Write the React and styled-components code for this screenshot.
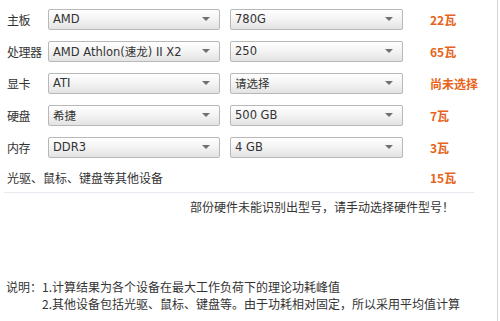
import React from "react";
import styled, { createGlobalStyle } from "styled-components";

const GlobalStyle = createGlobalStyle`
  body {
    margin: 0;
    background: #fff;
    font-family: "Noto Sans CJK SC", "DejaVu Sans", sans-serif;
    color: #333;
  }
`;

const rows = [
  { label: "主板", a: "AMD", b: "780G", watt: "22瓦" },
  { label: "处理器", a: "AMD Athlon(速龙) II X2", b: "250", watt: "65瓦" },
  { label: "显卡", a: "ATI", b: "请选择", watt: "尚未选择" },
  { label: "硬盘", a: "希捷", b: "500 GB", watt: "7瓦" },
  { label: "内存", a: "DDR3", b: "4 GB", watt: "3瓦" },
];

const App = () => {
  return (
    <Page>
      <GlobalStyle />
      <Table>
        {rows.map((r) => (
          <Row key={r.label}>
            <Label>{r.label}</Label>
            <Select width={172}>
              <Value>{r.a}</Value>
              <Arrow />
            </Select>
            <Select width={173} gap={10}>
              <Value>{r.b}</Value>
              <Arrow />
            </Select>
            <Watt>{r.watt}</Watt>
          </Row>
        ))}
        <Row last>
          <OtherLabel>光驱、鼠标、键盘等其他设备</OtherLabel>
          <Watt>15瓦</Watt>
        </Row>
      </Table>
      <Message>部份硬件未能识别出型号，请手动选择硬件型号！</Message>
      <Notes>
        <NoteHead>说明：</NoteHead>
        <NoteList>
          <span>1.计算结果为各个设备在最大工作负荷下的理论功耗峰值</span>
          <span>2.其他设备包括光驱、鼠标、键盘等。由于功耗相对固定，所以采用平均值计算</span>
        </NoteList>
      </Notes>
    </Page>
  );
};

const Page = styled.div`
  width: 498px;
  height: 321px;
  border-right: 1px solid #d4d4d4;
  display: flex;
  flex-direction: column;
  box-sizing: border-box;
`;

const Table = styled.div`
  margin: 0 23px 0 4px;
  padding-top: 3px;
  border-bottom: 1px solid #e6e9ef;
`;

const Row = styled.div`
  display: flex;
  align-items: center;
  height: ${(p) => (p.last ? "29px" : "32px")};
`;

const Label = styled.div`
  width: 44px;
  padding-left: 3px;
  box-sizing: border-box;
  font-size: 12px;
  color: #333;
  white-space: nowrap;
  letter-spacing: -0.5px;
`;

const Select = styled.div`
  width: ${(p) => p.width}px;
  margin-left: ${(p) => p.gap || 0}px;
  height: 21px;
  box-sizing: border-box;
  border: 1px solid #b8b8b8;
  border-radius: 2px;
  background: linear-gradient(#ffffff 0%, #f3f3f3 50%, #e3e3e3 100%);
  display: flex;
  align-items: center;
  justify-content: space-between;
  padding: 0 9px 0 4px;
`;

const Value = styled.span`
  font-family: "DejaVu Sans", "Noto Sans CJK SC", sans-serif;
  font-size: 11.5px;
  color: #333;
  white-space: nowrap;
`;

const Arrow = styled.span`
  width: 0;
  height: 0;
  border-left: 4px solid transparent;
  border-right: 4px solid transparent;
  border-top: 4px solid #707070;
`;

const Watt = styled.div`
  margin-left: auto;
  width: 44px;
  font-size: 12px;
  font-weight: bold;
  color: #e8631a;
  white-space: nowrap;
`;

const OtherLabel = styled.div`
  padding-left: 3px;
  font-size: 12px;
  color: #333;
`;

const Message = styled.div`
  text-align: right;
  padding-right: 43px;
  margin-top: 6px;
  font-size: 12px;
  line-height: 16px;
  color: #333;
`;

const Notes = styled.div`
  margin-top: 63px;
  padding-left: 6px;
  display: flex;
  font-size: 12px;
  line-height: 17px;
  color: #333;
`;

const NoteHead = styled.span`
  white-space: nowrap;
`;

const NoteList = styled.div`
  display: flex;
  flex-direction: column;
  white-space: nowrap;
`;

export default App;
